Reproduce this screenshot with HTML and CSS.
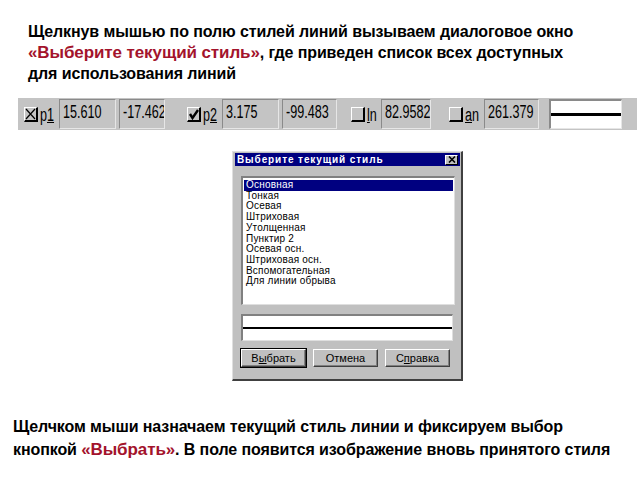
FILE: index.html
```html
<!DOCTYPE html>
<html lang="ru">
<head>
    <meta charset="UTF-8">
    <title>Выбор стиля линии</title>
    <link rel="stylesheet" href="styles.css">
</head>
<body>
    <!-- верхний текст -->
    <p class="intro">
        Щелкнув мышью по полю стилей линий вызываем диалоговое окно<br>
        <span class="accent">«Выберите текущий стиль»</span>, где приведен список всех доступных<br>
        для использования линий
    </p>

    <!-- панель свойств -->
    <div class="toolbar">
        <span class="check first">
            <svg width="13" height="14" viewBox="0 0 13 14"><path d="M2 2 L11 12 M11 2 L2 12" stroke="#000" stroke-width="1.2"/></svg>
        </span>
        <span class="tag"><b>p<u>1</u></b></span>
        <span class="field w57"><b>15.610</b></span>
        <span class="field w46"><b>-17.462</b></span>

        <span class="check second">
            <svg width="13" height="14" viewBox="0 0 13 14"><path d="M3 7 L5.5 11 L11 3" stroke="#000" stroke-width="2.4" fill="none"/></svg>
        </span>
        <span class="tag"><b>p<u>2</u></b></span>
        <span class="field w57"><b>3.175</b></span>
        <span class="field w55"><b>-99.483</b></span>

        <span class="check third"></span>
        <span class="tag narrow"><b><u>l</u>n</b></span>
        <span class="field w50"><b>82.9582</b></span>

        <span class="check fourth"></span>
        <span class="tag"><b><u>a</u>n</b></span>
        <span class="field w55"><b>261.379</b></span>

        <span class="line-style"><i></i></span>
    </div>

    <!-- диалоговое окно -->
    <div class="dialog">
        <div class="title-bar">
            <span>Выберите текущий стиль</span>
            <span class="close">
                <svg width="8" height="7" viewBox="0 0 8 7"><path d="M1 0.5 L7 6.5 M7 0.5 L1 6.5" stroke="#000" stroke-width="1.6"/></svg>
            </span>
        </div>
        <div class="dialog-body">
            <ul class="styles-list">
                <li class="selected">Основная</li>
                <li>Тонкая</li>
                <li>Осевая</li>
                <li>Штриховая</li>
                <li>Утолщенная</li>
                <li>Пунктир 2</li>
                <li>Осевая осн.</li>
                <li>Штриховая осн.</li>
                <li>Вспомогательная</li>
                <li>Для линии обрыва</li>
            </ul>
            <div class="preview"><i></i></div>
            <div class="buttons">
                <button class="default">В<u>ы</u>брать</button>
                <button>Отмена</button>
                <button>С<u>п</u>равка</button>
            </div>
        </div>
    </div>

    <!-- нижний текст -->
    <p class="outro">
        Щелчком мыши назначаем текущий стиль линии и фиксируем выбор<br>
        кнопкой <span class="accent">«Выбрать»</span>. В поле появится изображение вновь принятого стиля
    </p>
</body>
</html>
```
FILE: styles.css
```css
body {
    margin: 0;
    width: 640px;
    height: 480px;
    background: #ffffff;
    font-family: "Liberation Sans", Arial, sans-serif;
    color: #000;
    overflow: hidden;
}

.intro, .outro {
    margin: 0;
    font-weight: bold;
    font-size: 16px;
    letter-spacing: -0.1px;
    white-space: nowrap;
}

.intro {
    padding: 21px 0 0 28px;
    line-height: 21px;
}

.outro {
    padding: 0 0 0 13px;
    margin-top: 34px;
    line-height: 23px;
}

.outro span.accent + * { letter-spacing: 0; }

.accent {
    color: #a3132c; /* тёмно-красный */
    font-size: 17px;
}

/* панель свойств */
.toolbar {
    display: flex;
    align-items: center;
    height: 32px;
    margin: 14px 3px 0 18px;
    background: #c4c4c4;
}

.check {
    display: block;
    width: 11px;
    height: 12px;
    background: #c4c4c4;
    border-left: 1px solid #fff;
    border-top: 1px solid #fff;
    border-right: 2px solid #000;
    border-bottom: 2px solid #000;
    box-sizing: content-box;
    position: relative;
}

.check svg {
    position: absolute;
    left: -1px;
    top: -1px;
}

.check.first { margin-left: 6px; }
.check.second { margin-left: 22px; }
.check.third { margin-left: 14px; }
.check.fourth { margin-left: 18px; }

/* узкий шрифт панели: растянутые по высоте цифры */
.tag b, .field b {
    display: inline-block;
    font-weight: normal;
    font-size: 18px;
    transform: scaleX(0.7);
    transform-origin: left center;
    white-space: nowrap;
}

.tag {
    width: 18px;
    box-sizing: border-box;
    padding: 3px 0 0 2px;
}

.tag.narrow { width: 13px; }

.field {
    height: 30px;
    box-sizing: border-box;
    margin-left: 3px;
    padding: 2px 0 0 3px;
    border-left: 1px solid #8a8a8a;
    border-top: 1px solid #8a8a8a;
    border-right: 1px solid #e6e6e6;
    border-bottom: 1px solid #e6e6e6;
    overflow: hidden;
}

.w46 { width: 46px; }
.w50 { width: 50px; }
.w55 { width: 55px; }
.w57 { width: 57px; }

.line-style {
    display: flex;
    align-items: center;
    width: 73px;
    height: 30px;
    box-sizing: border-box;
    margin-left: 10px;
    background: #fff;
    border-left: 2px solid #8a8a8a;
    border-top: 2px solid #8a8a8a;
    border-right: 1px solid #e6e6e6;
    border-bottom: 1px solid #e6e6e6;
}

.line-style i {
    display: block;
    width: 100%;
    height: 3px;
    background: #000;
}

/* диалог */
.dialog {
    width: 231px;
    box-sizing: border-box;
    margin: 21px 0 0 232px;
    background: #c0c0c0;
    border-left: 1px solid #dfdfdf;
    border-top: 1px solid #dfdfdf;
    border-right: 2px solid #404040;
    border-bottom: 2px solid #404040;
    padding: 1px 1px 12px 2px;
}

.title-bar {
    display: flex;
    align-items: center;
    justify-content: space-between;
    height: 13px;
    padding: 0 2px 0 2px;
    background: #000080;
    color: #fff;
    font-weight: bold;
    font-size: 10px;
    letter-spacing: 0.9px;
}

.close {
    display: flex;
    align-items: center;
    justify-content: center;
    width: 13px;
    height: 10px;
    box-sizing: border-box;
    background: #c0c0c0;
    border-left: 1px solid #fff;
    border-top: 1px solid #fff;
    border-right: 1px solid #000;
    border-bottom: 1px solid #000;
}

.dialog-body {
    padding: 10px 5px 0 6px;
}

.styles-list {
    list-style: none;
    margin: 0;
    height: 129px;
    box-sizing: border-box;
    padding: 2px 1px;
    background: #fff;
    border-left: 2px solid #808080;
    border-top: 2px solid #808080;
    border-right: 1px solid #dfdfdf;
    border-bottom: 1px solid #dfdfdf;
    font-size: 10px;
    line-height: 10.7px;
    letter-spacing: 0.2px;
}

.styles-list li {
    padding-left: 2px;
    color: #000;
}

.styles-list li.selected {
    background: #000080;
    color: #fff;
}

.preview {
    display: flex;
    align-items: center;
    height: 27px;
    box-sizing: border-box;
    margin: 9px 2px 0 0;
    background: #fff;
    border-left: 2px solid #808080;
    border-top: 2px solid #808080;
    border-right: 1px solid #dfdfdf;
    border-bottom: 1px solid #dfdfdf;
}

.preview i {
    display: block;
    width: 100%;
    height: 2px;
    background: #000;
}

.buttons {
    display: flex;
    gap: 7px;
    margin-top: 8px;
}

button {
    width: 65px;
    height: 18px;
    padding: 0;
    font-family: "Liberation Sans", Arial, sans-serif;
    font-size: 11px;
    background: #c0c0c0;
    border-left: 1px solid #fff;
    border-top: 1px solid #fff;
    border-right: 1px solid #404040;
    border-bottom: 1px solid #404040;
    box-shadow: inset -1px -1px 0 #808080;
}

button.default {
    outline: 1px solid #000;
}
```
